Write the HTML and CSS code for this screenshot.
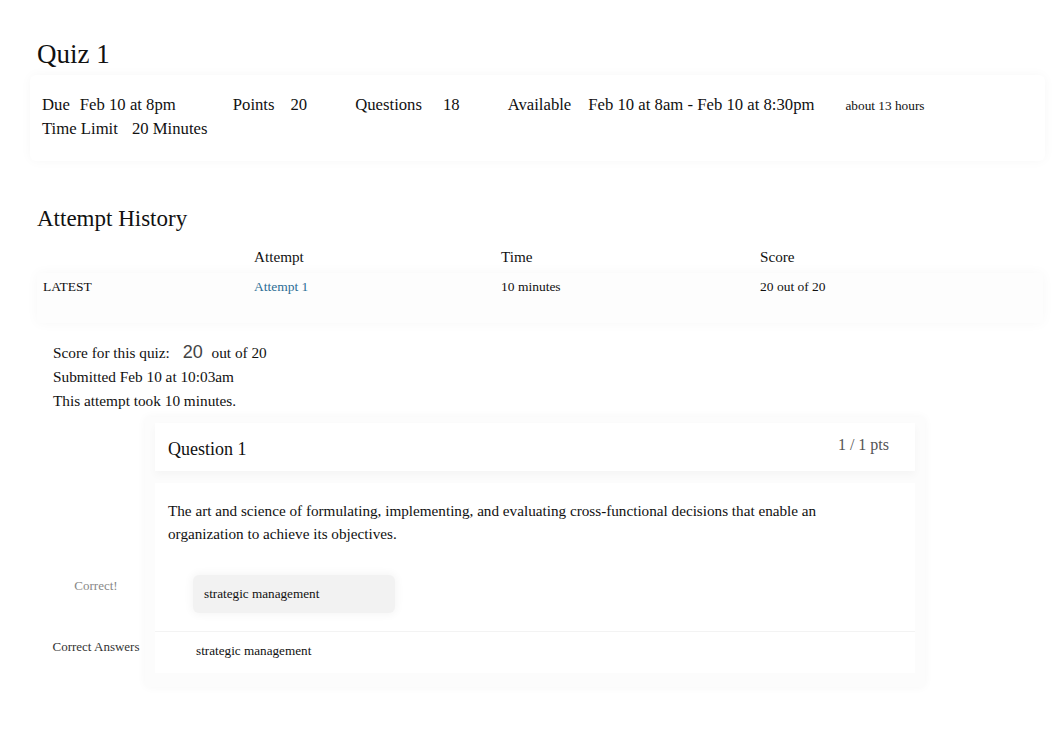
FILE: index.html
```html
<!DOCTYPE html>
<html lang="en">
<head>
<meta charset="utf-8">
<title>Quiz 1</title>
<link rel="stylesheet" href="styles.css">
</head>
<body>
<main class="page">
  <h1 class="title">Quiz 1</h1>
  <section class="details">
    <div class="details-row">
      <span class="item item-due"><span class="label">Due</span><span class="value">Feb 10 at 8pm</span></span>
      <span class="item item-points"><span class="label">Points</span><span class="value">20</span></span>
      <span class="item item-questions"><span class="label">Questions</span><span class="value">18</span></span>
      <span class="item item-available"><span class="label">Available</span><span class="value">Feb 10 at 8am - Feb 10 at 8:30pm</span></span>
      <span class="item small">about 13 hours</span>
    </div>
    <div class="details-row">
      <span class="item"><span class="label label-time">Time Limit</span><span class="value">20 Minutes</span></span>
    </div>
  </section>

  <h2 class="subtitle">Attempt History</h2>
  <table class="history">
    <thead>
      <tr><th class="c1"></th><th class="c2">Attempt</th><th class="c3">Time</th><th class="c4">Score</th></tr>
    </thead>
    <tbody>
      <tr><td class="c1">LATEST</td><td class="c2"><a class="link" href="#">Attempt 1</a></td><td class="c3">10 minutes</td><td class="c4">20 out of 20</td></tr>
      <tr class="spacer"><td colspan="4"></td></tr>
    </tbody>
  </table>

  <section class="summary">
    <div class="summary-line">Score for this quiz: <span class="score">20</span> out of 20</div>
    <div class="summary-line">Submitted Feb 10 at 10:03am</div>
    <div class="summary-line">This attempt took 10 minutes.</div>
  </section>

  <section class="question">
    <header class="q-header">
      <span class="q-name">Question 1</span>
      <span class="q-pts">1 / 1 pts</span>
    </header>
    <div class="q-body">
      <p class="q-text">The art and science of formulating, implementing, and evaluating cross-functional decisions that enable an organization to achieve its objectives.</p>
      <div class="answer-row answer-correct">
        <span class="answer-label label-correct">Correct!</span>
        <span class="answer-box">strategic management</span>
      </div>
      <div class="answer-row answer-key">
        <span class="answer-label">Correct Answers</span>
        <span class="answer-plain">strategic management</span>
      </div>
    </div>
  </section>
</main>
</body>
</html>
```

FILE: styles.css
```css
html, body {
  margin: 0;
  padding: 0;
  background: #ffffff;
}

body {
  font-family: "Liberation Serif", "Times New Roman", serif;
  color: #111111;
}

.page {
  padding: 38px 27px 40px 37px;
}

.title {
  margin: 0;
  font-size: 27px;
  line-height: 32px;
  font-weight: normal;
}

.details {
  margin: 5px -10px 0 -7px;
  padding: 18px 0 21px 12px;
  background: #ffffff;
  box-shadow: 0 0 12px rgba(0, 0, 0, 0.035);
  border-radius: 6px;
}

.details-row {
  display: flex;
  align-items: baseline;
  font-size: 16.7px;
  line-height: 23px;
}

.item {
  display: inline-flex;
  align-items: baseline;
  margin-right: 48px;
}

.item-due { margin-right: 57px; }

.label { margin-right: 14px; }
.item-due .label { margin-right: 10px; }
.item-points .label { margin-right: 16px; }
.item-questions .label { margin-right: 21px; }
.item-available .label { margin-right: 17px; }
.label-time { margin-right: 14px; }
.item-available { margin-right: 31px; }

.small {
  font-size: 13.3px;
}

.subtitle {
  margin: 45px 0 0 0;
  font-size: 23px;
  line-height: 26px;
  font-weight: normal;
}

.history {
  margin: 12px -8px 0 0;
  width: calc(100% + 8px);
  border-collapse: collapse;
}

.history th {
  font-weight: normal;
  font-size: 15.2px;
  line-height: 20px;
  text-align: left;
  padding: 3px 0 6px 0;
}

.history td {
  font-size: 13.5px;
  line-height: 18px;
  padding: 5px 0 0 0;
  text-align: left;
}

.history tbody {
  box-shadow: 0 0 12px rgba(0, 0, 0, 0.035);
}

.history tbody td {
  background: #fdfdfd;
}

.history .spacer td {
  height: 27px;
  padding: 0;
}

.c1 { width: 211px; padding-left: 6px !important; }
.c2 { width: 247px; }
.c3 { width: 259px; }

.link {
  color: #2d6d95;
  text-decoration: none;
}

.summary {
  margin: 17px 0 0 16px;
}

.summary-line {
  font-size: 15.3px;
  line-height: 24px;
}

.score {
  font-family: "Liberation Sans", Arial, sans-serif;
  font-size: 18px;
  color: #444444;
  margin: 0 5px 0 9px;
}

.question {
  margin: 4px 0 0 108px;
  width: 780px;
  padding: 6px 10px 14px 10px;
  box-sizing: border-box;
  background: #fcfcfc;
  box-shadow: 0 0 10px rgba(0, 0, 0, 0.04);
  border-radius: 4px;
}

.q-header {
  display: flex;
  justify-content: space-between;
  align-items: flex-start;
  padding: 8px 26px 10px 13px;
  background: #ffffff;
  box-shadow: 0 4px 8px rgba(0, 0, 0, 0.03);
}

.q-name {
  font-size: 18px;
  line-height: 24px;
  padding-top: 6px;
}

.q-pts {
  font-size: 16px;
  line-height: 20px;
  padding-top: 4px;
  color: #555555;
}

.q-body {
  margin-top: 12px;
  padding: 16px 0 8px 0;
  background: #ffffff;
}

.q-text {
  margin: 0 80px 0 13px;
  font-size: 15.2px;
  line-height: 23px;
}

.answer-row {
  display: flex;
  align-items: center;
}

.answer-label {
  width: 92px;
  margin-left: -105px;
  font-size: 13px;
  text-align: center;
  color: #333333;
  flex: none;
}

.label-correct {
  color: #888888;
  position: relative;
  top: -8px;
}

.answer-correct {
  margin-top: 30px;
  padding-bottom: 18px;
  border-bottom: 1px solid #f3f3f3;
}

.answer-box {
  margin-left: 51px;
  width: 180px;
  padding: 11px 11px 11px 11px;
  font-size: 13.2px;
  line-height: 16px;
  background: #f2f2f2;
  box-shadow: 0 0 8px 2px rgba(0, 0, 0, 0.04);
  border-radius: 6px;
}

.answer-key {
  padding: 3px 0 6px 0;
}

.answer-plain {
  margin-left: 54px;
  font-size: 13.2px;
  line-height: 16px;
  padding-top: 8px;
}
```
